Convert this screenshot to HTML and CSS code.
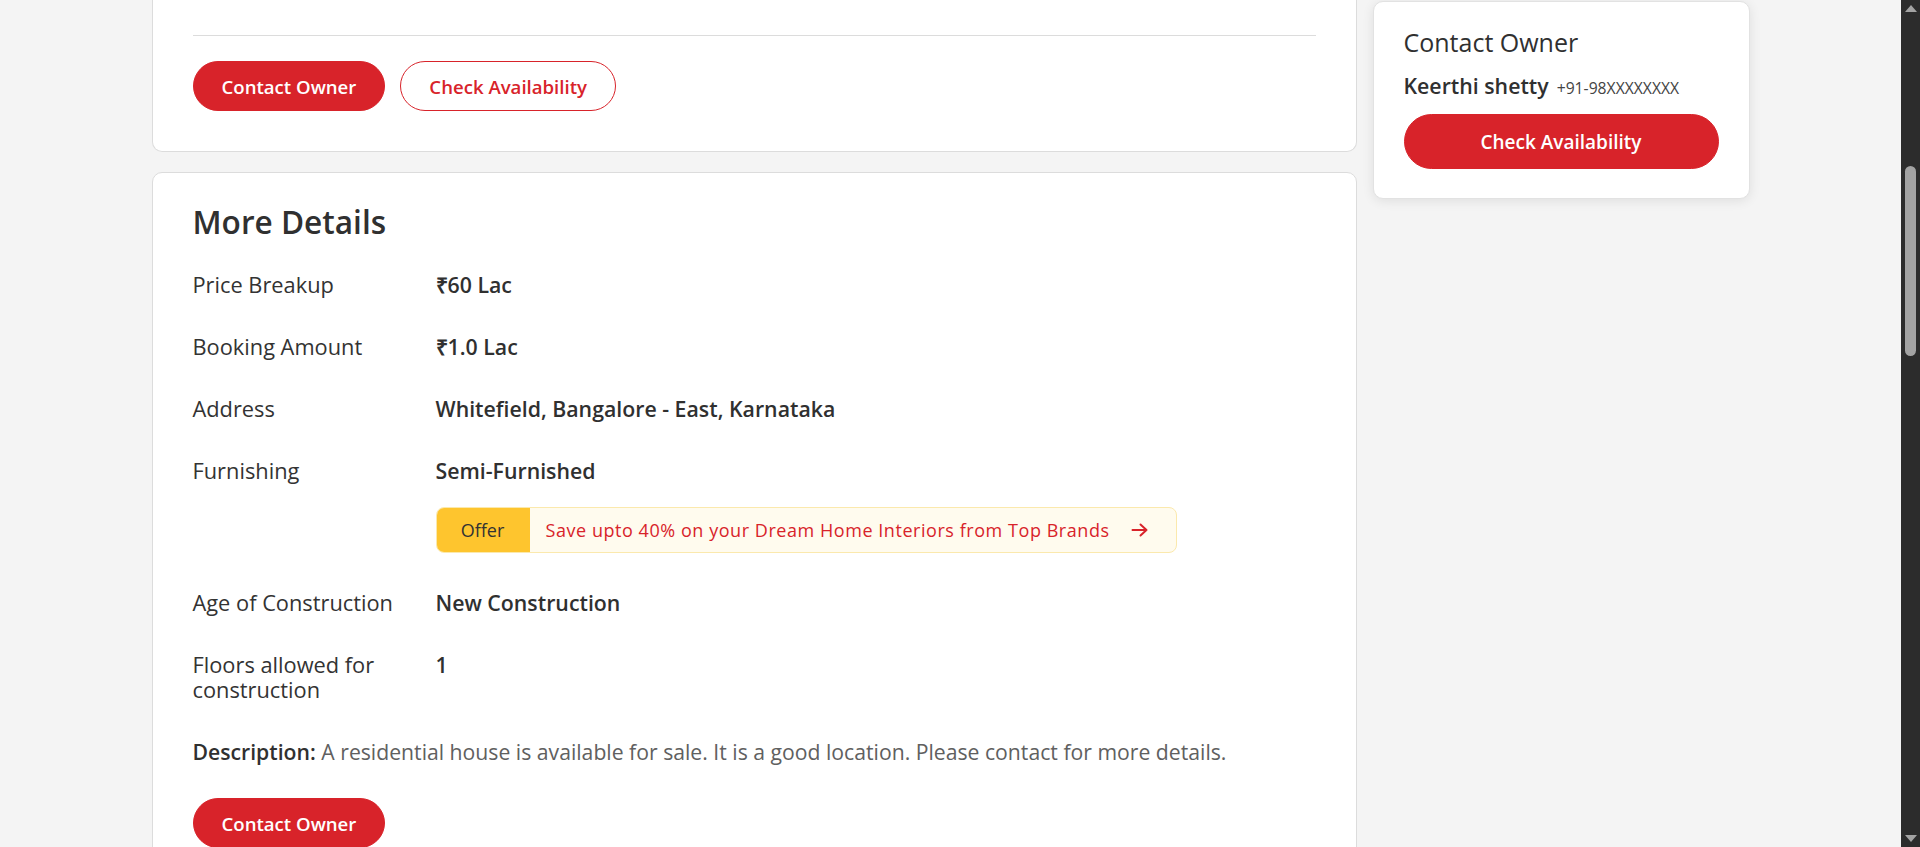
FILE: index.html
```html
<!DOCTYPE html>
<html lang="en">
<head>
<meta charset="utf-8">
<title>Property Details</title>
<link rel="stylesheet" href="styles.css">
</head>
<body>
<div class="page">
  <main class="viewport">
    <div class="container">
      <div class="left-col">
        <section class="card card-top">
          <div class="divider"></div>
          <div class="actions">
            <button class="btn btn-solid">Contact Owner</button>
            <button class="btn btn-outline">Check Availability</button>
          </div>
        </section>

        <section class="card card-details">
          <h2 class="details-title">More Details</h2>
          <div class="details-list">
            <div class="row">
              <div class="label">Price Breakup</div>
              <div class="value">₹60 Lac</div>
            </div>
            <div class="row">
              <div class="label">Booking Amount</div>
              <div class="value">₹1.0 Lac</div>
            </div>
            <div class="row">
              <div class="label">Address</div>
              <div class="value">Whitefield, Bangalore - East, Karnataka</div>
            </div>
            <div class="row">
              <div class="label">Furnishing</div>
              <div class="value">
                <div>Semi-Furnished</div>
                <div class="offer">
                  <span class="offer-tag">Offer</span>
                  <span class="offer-text">Save upto 40% on your Dream Home Interiors from Top Brands</span>
                  <svg class="offer-arrow" width="17" height="14" viewBox="0 0 17 14" fill="none" stroke="#d8232a" stroke-width="2" stroke-linecap="round" stroke-linejoin="round"><path d="M1.5 7H15.5M9.5 1.5L15.5 7L9.5 12.5"/></svg>
                </div>
              </div>
            </div>
            <div class="row">
              <div class="label">Age of Construction</div>
              <div class="value">New Construction</div>
            </div>
            <div class="row">
              <div class="label">Floors allowed for construction</div>
              <div class="value">1</div>
            </div>
          </div>
          <p class="description"><strong>Description:</strong> A residential house is available for sale. It is a good location. Please contact for more details.</p>
          <button class="btn btn-solid">Contact Owner</button>
        </section>
      </div>

      <aside class="right-col">
        <div class="card contact-card">
          <h3 class="contact-title">Contact Owner</h3>
          <div class="owner">
            <span class="owner-name">Keerthi shetty</span>
            <span class="owner-phone">+91-98XXXXXXXX</span>
          </div>
          <button class="btn btn-solid btn-wide">Check Availability</button>
        </div>
      </aside>
    </div>
  </main>
  <div class="scrollbar">
    <span class="sb-arrow sb-up"></span>
    <div class="sb-track">
      <div class="sb-thumb"></div>
    </div>
    <span class="sb-arrow sb-down"></span>
  </div>
</div>
</body>
</html>
```

FILE: styles.css
```css
* { box-sizing: border-box; }

html, body {
  margin: 0;
  padding: 0;
  height: 847px;
  overflow: hidden;
  background: #f4f4f4;
  font-family: "Open Sans", "Liberation Sans", sans-serif;
  color: #303030;
}

.page {
  display: flex;
  height: 847px;
}

.viewport {
  flex: 1;
  overflow: hidden;
}

.container {
  width: 1598px;
  margin: 0 auto;
  display: flex;
  gap: 16px;
  align-items: flex-start;
}

.left-col {
  width: 1205px;
  display: flex;
  flex-direction: column;
  gap: 20px;
}

.right-col {
  width: 377px;
  padding-top: 1px;
}

.card {
  background: #fff;
  border: 1px solid #dcdcdc;
  border-radius: 10px;
}

.card-top {
  border-top: none;
  border-radius: 0 0 10px 10px;
  padding: 35px 40px 40px;
}

.divider {
  border-top: 1px solid #dcdcdc;
}

.actions {
  display: flex;
  gap: 15px;
  margin-top: 25px;
}

.btn {
  font-family: "Open Sans", "Liberation Sans", sans-serif;
  font-weight: 600;
  font-size: 18.6px;
  height: 50px;
  border-radius: 25px;
  padding: 0 28px;
  cursor: pointer;
  display: inline-flex;
  align-items: center;
  justify-content: center;
}

.btn-solid {
  background: #d8232a;
  border: 1px solid #d8232a;
  color: #fff;
}

.btn-outline {
  background: #fff;
  border: 1px solid #d8232a;
  color: #d8232a;
}

.card-details {
  padding: 30px 40px 60px;
}

.details-title {
  margin: 0;
  font-size: 31.6px;
  line-height: 37px;
  font-weight: 600;
  color: #303030;
}

.details-list {
  margin-top: 32px;
  display: flex;
  flex-direction: column;
  gap: 37px;
}

.row {
  display: grid;
  grid-template-columns: 220px 1fr;
  column-gap: 23px;
  line-height: 25px;
}

.label {
  color: #333;
  font-weight: 400;
  font-size: 21.8px;
}

.value {
  font-weight: 600;
  font-size: 21.3px;
  color: #303030;
}

.offer {
  display: inline-flex;
  align-items: stretch;
  height: 46px;
  margin-top: 24px;
  background: #fffbee;
  border: 1px solid #fbe9ad;
  border-radius: 8px;
  overflow: hidden;
  font-size: 18px;
  font-weight: 500;
}

.offer-tag {
  width: 94px;
  margin: -1px 0 -1px -1px;
  background: #fec52e;
  color: #333;
  display: flex;
  align-items: center;
  justify-content: center;
}

.offer-text {
  color: #d8232a;
  padding-left: 16px;
  letter-spacing: 0.55px;
  display: flex;
  align-items: center;
}

.offer-arrow {
  align-self: center;
  margin: 0 28px 0 21px;
}

.description {
  margin: 37px 0 0;
  font-size: 21.2px;
  line-height: 25px;
  color: #606060;
}

.description strong {
  color: #303030;
  font-weight: 600;
}

.card-details > .btn {
  margin-top: 34px;
}

.contact-card {
  padding: 26px 30px 29px;
  border-color: #e2e2e2;
  box-shadow: 0 2px 12px rgba(0, 0, 0, 0.09);
}

.contact-title {
  margin: 0;
  font-size: 25px;
  line-height: 28px;
  font-weight: 500;
  color: #303030;
}

.owner {
  margin-top: 18px;
  display: flex;
  align-items: baseline;
  gap: 8px;
  line-height: 24px;
}

.owner-name {
  font-size: 21.3px;
  font-weight: 600;
}

.owner-phone {
  font-size: 15.7px;
  color: #444;
}

.btn-wide {
  width: 100%;
  height: 55px;
  border-radius: 28px;
  margin-top: 14px;
  font-size: 19px;
}

.scrollbar {
  width: 19px;
  background: #2c2c2c;
  display: flex;
  flex-direction: column;
  align-items: center;
  padding: 5px 0;
}

.sb-arrow {
  width: 0;
  height: 0;
  border-left: 6px solid transparent;
  border-right: 6px solid transparent;
}

.sb-up { border-bottom: 7px solid #a3a3a3; }
.sb-down { border-top: 7px solid #a3a3a3; }

.sb-track {
  flex: 1;
  width: 100%;
  padding-top: 154px;
  display: flex;
  justify-content: center;
}

.sb-thumb {
  width: 11px;
  height: 190px;
  border-radius: 6px;
  background: #a3a3a3;
}
```
